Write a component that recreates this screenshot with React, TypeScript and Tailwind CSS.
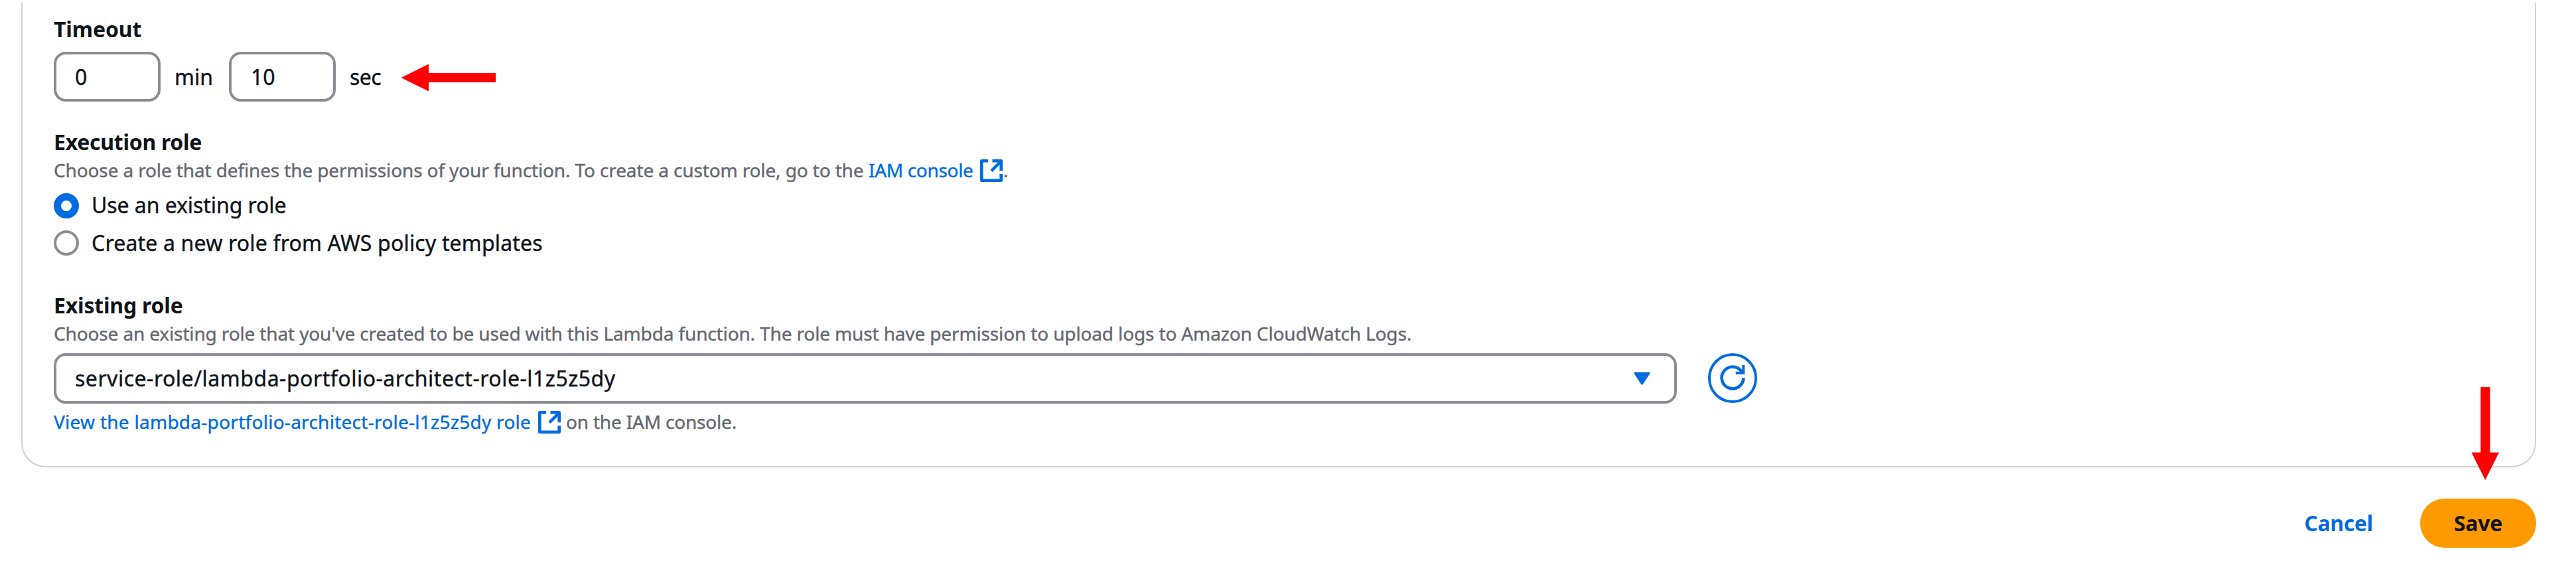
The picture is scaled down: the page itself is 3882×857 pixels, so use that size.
import React from "react";

function ExternalIcon() {
  return (
    <svg viewBox="0 0 34 34" className="h-[34px] w-[34px] shrink-0" fill="none" stroke="#006ce0" strokeWidth="4.6">
      <path d="M12 2.3H2.3V31.7H31.7V22" strokeLinejoin="round" />
      <path d="M18.5 2.3H31.7V17.3" strokeLinejoin="round" />
      <path d="M17 17.4L31 3.4" />
    </svg>
  );
}

function Label({ className, children }: { className: string; children: React.ReactNode }) {
  return <div className={`h-[46px] text-[32px] leading-[46px] font-bold [-webkit-text-stroke:0px] ${className}`}>{children}</div>;
}

export default function App() {
  return (
    <div className="relative flex h-[857px] w-full flex-col overflow-hidden bg-white pt-[4px] pr-[60px] pl-[32px] font-['Noto_Sans',sans-serif] whitespace-nowrap text-[#0f141a] [-webkit-text-stroke:0.4px]">
      <section className="flex h-[700px] flex-col rounded-b-[37px] border-x-2 border-b-2 border-[#d0d0d6] pt-[17px] pl-[47px]">
        <Label className="tracking-[-0.1px]">Timeout</Label>
        <div className="mt-[11px] flex h-[75px] items-center text-[32px] leading-[46px]">
          <div className="flex h-[75px] w-[161px] items-center rounded-[18px] border-[4.600px] border-[#8c8c94] pl-[28px]">0</div>
          <span className="ml-[21px] w-[82px]">min</span>
          <div className="flex h-[75px] w-[161px] items-center rounded-[18px] border-4 border-[#8c8c94] pl-[29px]">10</div>
          <span className="ml-[21px] tracking-[-0.6px]">sec</span>
        </div>

        <Label className="mt-[38px] tracking-[-0.28px]">Execution role</Label>
        <div className="mt-px flex h-[37px] items-center text-[28px] leading-[37px] text-[#656871]">
          <span className="w-[1228px] tracking-[-0.13px]">
            Choose a role that defines the permissions of your function. To create a custom role, go to the
          </span>
          <a className="mr-[10px] w-[158px] tracking-[-0.33px] text-[#006ce0]">IAM console</a>
          <ExternalIcon />
          <span className="ml-px">.</span>
        </div>
        <div className="mt-[11px] flex flex-col gap-[11px] text-[32px] leading-[46px]">
          <label className="flex h-[46px] items-center">
            <span className="mt-px h-[38px] w-[38px] rounded-full border-[11px] border-[#006ce0]" />
            <span className="ml-[19px] tracking-[-0.07px]">Use an existing role</span>
          </label>
          <label className="flex h-[46px] items-center">
            <span className="h-[38px] w-[38px] rounded-full border-4 border-[#8c8c94]" />
            <span className="ml-[19px] tracking-[0.18px]">Create a new role from AWS policy templates</span>
          </label>
        </div>

        <Label className="mt-[48px] tracking-[-0.2px]">Existing role</Label>
        <p className="mt-px h-[37px] text-[28px] leading-[37px] tracking-[-0.14px] text-[#656871]">
          Choose an existing role that you've created to be used with this Lambda function. The role must have permission to upload logs to Amazon CloudWatch Logs.
        </p>
        <div className="mt-[11px] flex h-[76px] items-center">
          <div className="flex h-[76px] w-[2446px] items-center justify-between rounded-[18px] border-4 border-[#8c8c94] pr-[36px] pl-[28px] text-[32px]">
            <span className="tracking-[0.51px]">service-role/lambda-portfolio-architect-role-l1z5z5dy</span>
            <svg viewBox="0 0 25 20" className="h-[20px] w-[25px]" fill="#006ce0">
              <path d="M2 .5H23Q25.200 .8 24.200 3L14 18.500Q12.500 20.300 11 18.500L.8 3Q-.2 .8 2 .5Z" />
            </svg>
          </div>
          <button className="mb-[2px] ml-[47px] flex h-[75px] w-[74px] items-center justify-center rounded-full border-4 border-[#006ce0]">
            <svg viewBox="-22 -22 44 44" className="h-[44px] w-[44px] shrink-0" fill="none" stroke="#006ce0" strokeWidth="4.6">
              <path d="M16.400 0A16.400 16.400 0 1 1 13.400 -9.500L15.500 -7" />
              <path d="M16.300 -19V-7.200H4.700" strokeWidth="4" />
            </svg>
          </button>
        </div>
        <div className="mt-[9px] flex h-[37px] items-center text-[28px] leading-[37px] text-[#656871]">
          <a className="mr-[10px] w-[720px] tracking-[0.27px] text-[#006ce0]">View the lambda-portfolio-architect-role-l1z5z5dy role</a>
          <ExternalIcon />
          <span className="ml-[8px] tracking-[-0.19px]">on the IAM console.</span>
        </div>
      </section>

      <footer className="mt-[47px] flex h-[74px] items-center justify-end text-[32px] font-bold [-webkit-text-stroke:0px]">
        <button className="mr-[71px] tracking-[-0.37px] text-[#006ce0]">Cancel</button>
        <button className="h-[74px] w-[175px] rounded-full bg-[#ff9900] tracking-[-0.3px]">Save</button>
      </footer>

      <svg viewBox="0 0 143 42" className="absolute top-[96px] left-[604px] h-[42px] w-[143px]" fill="#ff0000">
        <path d="M.5 21L42 .5V14H143V28H42V41.500Z" />
      </svg>
      <svg viewBox="0 0 42 140" className="absolute top-[583px] left-[3724px] h-[140px] w-[42px]" fill="#ff0000">
        <path d="M14.300 0H28.500V98.500H42L21.200 140L.5 98.500H14.300Z" />
      </svg>
    </div>
  );
}
